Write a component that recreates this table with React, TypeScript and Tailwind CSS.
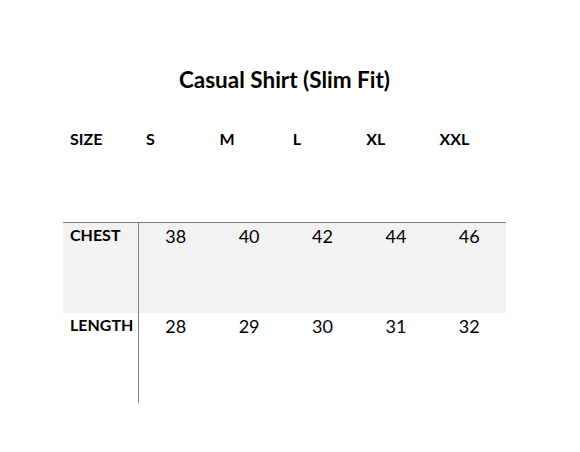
import React from "react";

const sizes = ["S", "M", "L", "XL", "XXL"];

const rows = [
  { label: "CHEST", values: [38, 40, 42, 44, 46], shaded: true },
  { label: "LENGTH", values: [28, 29, 30, 31, 32], shaded: false },
];

const App: React.FC = () => {
  return (
    <div className="w-[580px] h-[452px] bg-white text-black font-['Lato','Liberation_Sans',sans-serif]">
      <div className="ml-[63px] w-[443px] pt-[67px]">
        <h1 className="text-center text-[22.5px] leading-[26px] font-bold">Casual Shirt (Slim Fit)</h1>

        <div className="mt-[34px]">
          {/* header */}
          <div className="grid grid-cols-[76px_repeat(5,1fr)] h-[95px] text-[16px] leading-[22px] font-bold">
            <div className="pl-[7px] pt-[1px]">SIZE</div>
            {sizes.map((s) => (
              <div key={s} className="pl-[7px] pt-[1px]">
                {s}
              </div>
            ))}
          </div>

          <div className="border-t border-[#808080]">
            {rows.map((row) => (
              <div
                key={row.label}
                className={`grid grid-cols-[76px_repeat(5,1fr)] h-[90px] leading-[22px] ${
                  row.shaded ? "bg-[#f2f2f2]" : "bg-white"
                }`}
              >
                <div className="pl-[7px] pt-[1px] text-[16px] font-bold border-r border-[#808080]">
                  {row.label}
                </div>
                {row.values.map((v) => (
                  <div key={v} className="pt-[2px] text-[18px] text-center">
                    {v}
                  </div>
                ))}
              </div>
            ))}
          </div>
        </div>
      </div>
    </div>
  );
};

export default App;
